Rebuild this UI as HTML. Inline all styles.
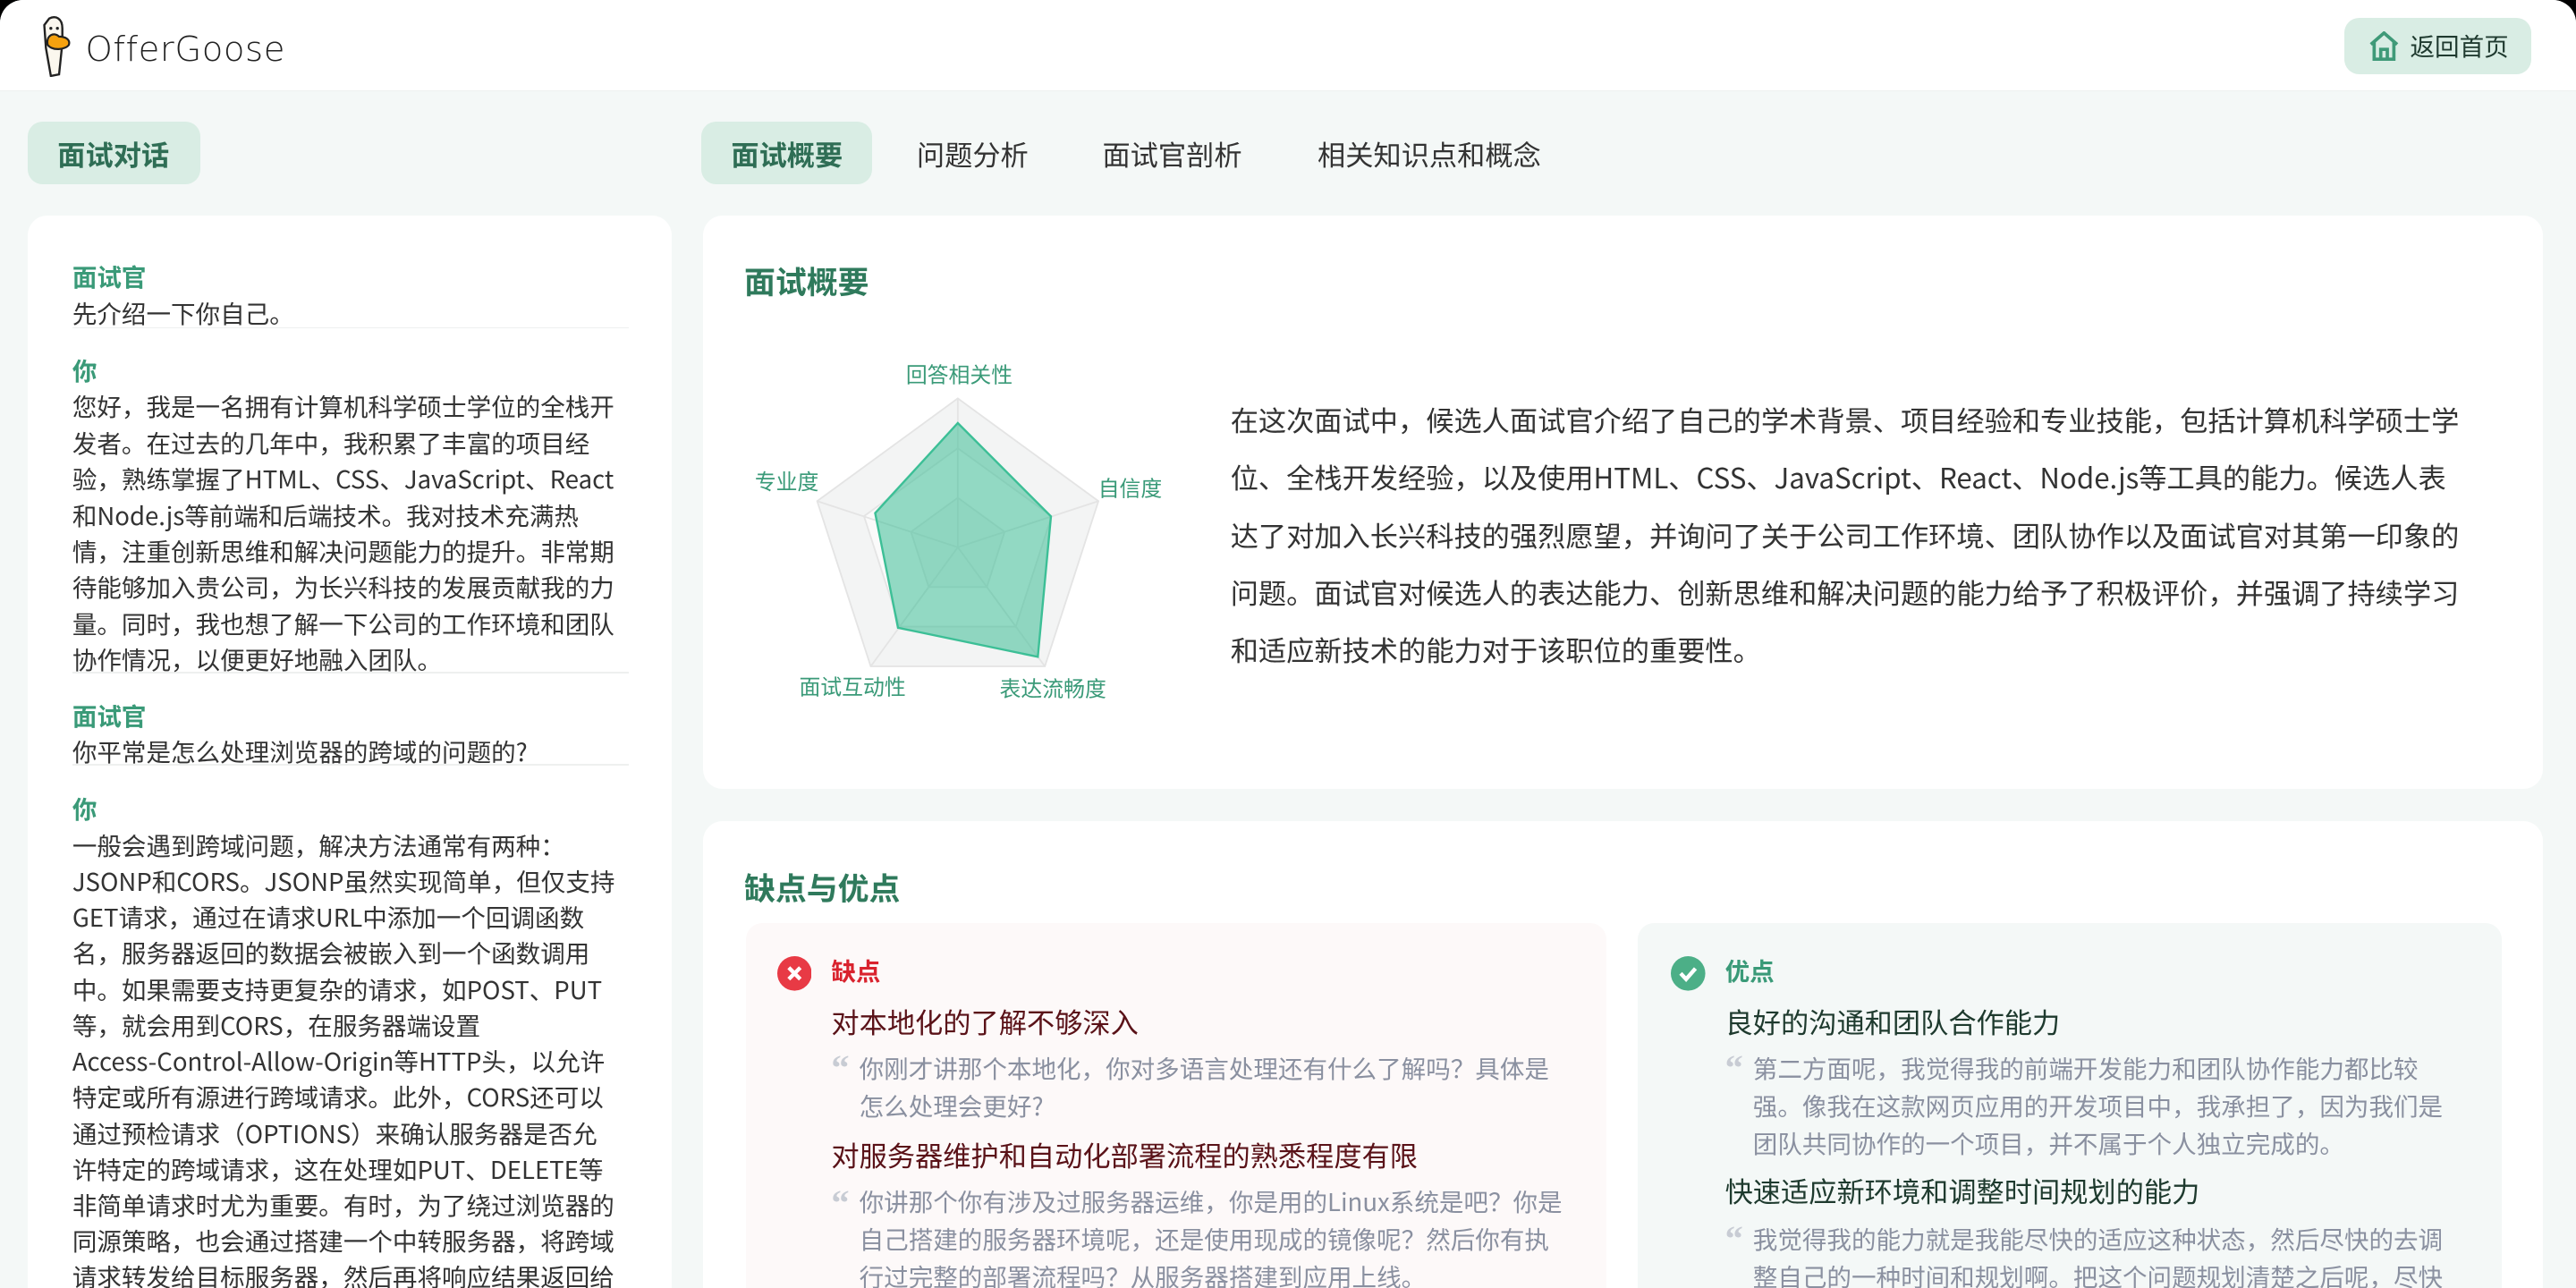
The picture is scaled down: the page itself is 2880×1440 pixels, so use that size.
<!DOCTYPE html>
<html><head><meta charset="utf-8"><style>
html,body{margin:0;padding:0;background:#000;overflow:hidden;width:2880px;height:1440px}
#w{position:relative;width:1568px;height:784px;zoom:1.836735;background:#f4f8f7;font-family:"Noto Sans CJK SC","Liberation Sans",sans-serif;color:#333;border-radius:14px 14px 0 0;overflow:hidden}
.a{position:absolute;line-height:1.3}
.hdr{left:0;top:0;width:1568px;height:55px;background:#fff;border-bottom:1px solid #eef1f0}
.pill{background:#d9ede4;border-radius:9px}
.card{background:#fff;border-radius:12px}
.lbl{color:#3a9a78;font-weight:bold;font-size:15px;line-height:22px}
.txt{font-size:15px;line-height:22px;color:#333}
.sep{height:1px;background:#eef0ef;width:339px}
.tab{font-size:17px;color:#333;top:83px}
.q{font-size:15px;line-height:23px;color:#8a90a0}
.qm{color:#c8ccd4;font-size:22px;font-family:"Liberation Serif",serif;font-weight:bold}
</style></head><body><div id="w">
<div class="a hdr"></div>
<svg class="a" style="left:24px;top:9px" width="26" height="38" viewBox="0 0 26 38">
<path d="M6 2 C10 0 14 2 14 8 L14 17 L12 36 L7 37 L4 20 L3 6 Z" fill="#fbf7ee" stroke="#222" stroke-width="1.3"/>
<path d="M5 18 C4 12 9 10 12 13 C16 13 19 15 18 18 C16 21 8 22 5 18 Z" fill="#f5a10f" stroke="#222" stroke-width="1.2"/>
<circle cx="7" cy="8" r="0.9" fill="#222"/><circle cx="11" cy="8" r="0.9" fill="#222"/>
</svg>
<div class="a" style="left:52px;top:17px;font-size:21px;color:#222;letter-spacing:0.3px;font-family:'DejaVu Sans','Liberation Sans',sans-serif;font-weight:300">OfferGoose</div>
<div class="a pill" style="left:1427px;top:11px;width:114px;height:34px"></div>
<svg class="a" style="left:1441px;top:19px" width="20" height="18" viewBox="0 0 20 18"><path d="M2 8 L10 1 L18 8 M4 6.5 V17 H16 V6.5 M8 17 V11 H12 V17" fill="none" stroke="#3f9a78" stroke-width="2"/></svg>
<div class="a" style="left:1467px;top:18px;font-size:15px;color:#1f3a2f">返回首页</div>

<div class="a pill" style="left:17px;top:74px;width:105px;height:38px"></div>
<div class="a" style="left:35px;top:83px;font-size:17px;font-weight:bold;color:#2f6e55">面试对话</div>
<div class="a pill" style="left:427px;top:74px;width:104px;height:38px"></div>
<div class="a" style="left:445px;top:83px;font-size:17px;font-weight:bold;color:#2f6e55">面试概要</div>
<div class="a tab" style="left:558px">问题分析</div>
<div class="a tab" style="left:671px">面试官剖析</div>
<div class="a tab" style="left:802px">相关知识点和概念</div>

<div class="a card" style="left:17px;top:131px;width:392px;height:670px"></div>
<div class="a" style="left:44px;top:157px">
<div class="lbl">面试官</div>
<div class="txt">先介绍一下你自己。</div>
<div class="sep" style="margin-top:-2px"></div>
<div class="lbl" style="margin-top:14px">你</div>
<div class="txt">您好，我是一名拥有计算机科学硕士学位的全栈开<br>发者。在过去的几年中，我积累了丰富的项目经<br>验，熟练掌握了HTML、CSS、JavaScript、React<br>和Node.js等前端和后端技术。我对技术充满热<br>情，注重创新思维和解决问题能力的提升。非常期<br>待能够加入贵公司，为长兴科技的发展贡献我的力<br>量。同时，我也想了解一下公司的工作环境和团队<br>协作情况，以便更好地融入团队。</div>
<div class="sep" style="margin-top:-3px"></div>
<div class="lbl" style="margin-top:14px">面试官</div>
<div class="txt">你平常是怎么处理浏览器的跨域的问题的?</div>
<div class="sep" style="margin-top:-3px"></div>
<div class="lbl" style="margin-top:15px">你</div>
<div class="txt" style="line-height:21.9px">一般会遇到跨域问题，解决方法通常有两种：<br>JSONP和CORS。JSONP虽然实现简单，但仅支持<br>GET请求，通过在请求URL中添加一个回调函数<br>名，服务器返回的数据会被嵌入到一个函数调用<br>中。如果需要支持更复杂的请求，如POST、PUT<br>等，就会用到CORS，在服务器端设置<br>Access-Control-Allow-Origin等HTTP头，以允许<br>特定或所有源进行跨域请求。此外，CORS还可以<br>通过预检请求（OPTIONS）来确认服务器是否允<br>许特定的跨域请求，这在处理如PUT、DELETE等<br>非简单请求时尤为重要。有时，为了绕过浏览器的<br>同源策略，也会通过搭建一个中转服务器，将跨域<br>请求转发给目标服务器，然后再将响应结果返回给</div>
</div>

<div class="a card" style="left:428px;top:131px;width:1120px;height:349px"></div>
<div class="a" style="left:453px;top:159px;font-size:19px;font-weight:bold;color:#2f7a5c">面试概要</div>
<svg class="a" style="left:440px;top:200px" width="300" height="240" viewBox="440 200 300 240">
<polygon points="583.1,242.7 668.7,305.2 636.1,405.8 530.1,405.8 497.5,305.2" fill="#f3f4f4" stroke="#e4e4e4"/>
<polygon points="583.1,273 640.2,314.4 618.4,381.6 547.8,381.6 526,314.4" fill="#fafafa" stroke="#e4e4e4"/>
<polygon points="583.1,303.2 611.6,323.9 600.8,357.5 565.4,357.5 554.6,323.9" fill="#f3f4f4" stroke="#e4e4e4"/>
<g stroke="#e4e4e4"><line x1="583.1" y1="333.3" x2="583.1" y2="242.7"/><line x1="583.1" y1="333.3" x2="668.7" y2="305.2"/><line x1="583.1" y1="333.3" x2="636.1" y2="405.8"/><line x1="583.1" y1="333.3" x2="530.1" y2="405.8"/><line x1="583.1" y1="333.3" x2="497.5" y2="305.2"/></g>
<polygon points="583.1,257.7 639.8,314.5 631.8,400 546.7,382.3 532.8,312.5" fill="rgba(60,190,150,0.55)" stroke="#3cbf96" stroke-width="1.3"/>
<g fill="#3a9a78" font-size="13" font-family="Noto Sans CJK SC,sans-serif" text-anchor="middle">
<text x="584" y="233">回答相关性</text><text x="688" y="302">自信度</text><text x="479" y="298">专业度</text><text x="519" y="423">面试互动性</text><text x="641" y="424">表达流畅度</text></g>
</svg>
<div class="a" style="left:749px;top:238px;font-size:17px;line-height:35px;color:#333;white-space:nowrap">在这次面试中，候选人面试官介绍了自己的学术背景、项目经验和专业技能，包括计算机科学硕士学<br>位、全栈开发经验，以及使用HTML、CSS、JavaScript、React、Node.js等工具的能力。候选人表<br>达了对加入长兴科技的强烈愿望，并询问了关于公司工作环境、团队协作以及面试官对其第一印象的<br>问题。面试官对候选人的表达能力、创新思维和解决问题的能力给予了积极评价，并强调了持续学习<br>和适应新技术的能力对于该职位的重要性。</div>

<div class="a card" style="left:428px;top:500px;width:1120px;height:300px"></div>
<div class="a" style="left:453px;top:528px;font-size:19px;font-weight:bold;color:#2f7a5c">缺点与优点</div>
<div class="a" style="left:454px;top:562px;width:524px;height:240px;background:#fdf9f9;border-radius:10px"></div>
<div class="a" style="left:997px;top:562px;width:526px;height:240px;background:#f4f8f7;border-radius:10px"></div>

<svg class="a" style="left:473px;top:582px" width="21" height="21" viewBox="0 0 21 21"><circle cx="10.5" cy="10.5" r="10.5" fill="#e83a45"/><path d="M7 7 L14 14 M14 7 L7 14" stroke="#fff" stroke-width="2.4"/></svg>
<div class="a" style="left:506px;top:581px;font-size:15px;font-weight:bold;color:#d9232e">缺点</div>
<div class="a" style="left:506px;top:611px;font-size:17px;color:#5a1218">对本地化的了解不够深入</div>
<div class="a qm" style="left:506px;top:636px">“</div>
<div class="a q" style="left:523px;top:638px">你刚才讲那个本地化，你对多语言处理还有什么了解吗？具体是<br>怎么处理会更好?</div>
<div class="a" style="left:506px;top:692px;font-size:17px;color:#5a1218">对服务器维护和自动化部署流程的熟悉程度有限</div>
<div class="a qm" style="left:506px;top:718px">“</div>
<div class="a q" style="left:523px;top:719px">你讲那个你有涉及过服务器运维，你是用的Linux系统是吧？你是<br>自己搭建的服务器环境呢，还是使用现成的镜像呢？然后你有执<br>行过完整的部署流程吗？从服务器搭建到应用上线。</div>

<svg class="a" style="left:1017px;top:582px" width="21" height="21" viewBox="0 0 21 21"><circle cx="10.5" cy="10.5" r="10.5" fill="#4caf87"/><path d="M6 10.5 L9.3 14 L15 7.5" fill="none" stroke="#fff" stroke-width="2.4"/></svg>
<div class="a" style="left:1050px;top:581px;font-size:15px;font-weight:bold;color:#3a9a78">优点</div>
<div class="a" style="left:1050px;top:611px;font-size:17px;color:#1e3a2e">良好的沟通和团队合作能力</div>
<div class="a qm" style="left:1050px;top:636px">“</div>
<div class="a q" style="left:1067px;top:638px">第二方面呢，我觉得我的前端开发能力和团队协作能力都比较<br>强。像我在这款网页应用的开发项目中，我承担了，因为我们是<br>团队共同协作的一个项目，并不属于个人独立完成的。</div>
<div class="a" style="left:1050px;top:714px;font-size:17px;color:#1e3a2e">快速适应新环境和调整时间规划的能力</div>
<div class="a qm" style="left:1050px;top:740px">“</div>
<div class="a q" style="left:1067px;top:742px">我觉得我的能力就是我能尽快的适应这种状态，然后尽快的去调<br>整自己的一种时间和规划啊。把这个问题规划清楚之后呢，尽快</div>
</div></body></html>
